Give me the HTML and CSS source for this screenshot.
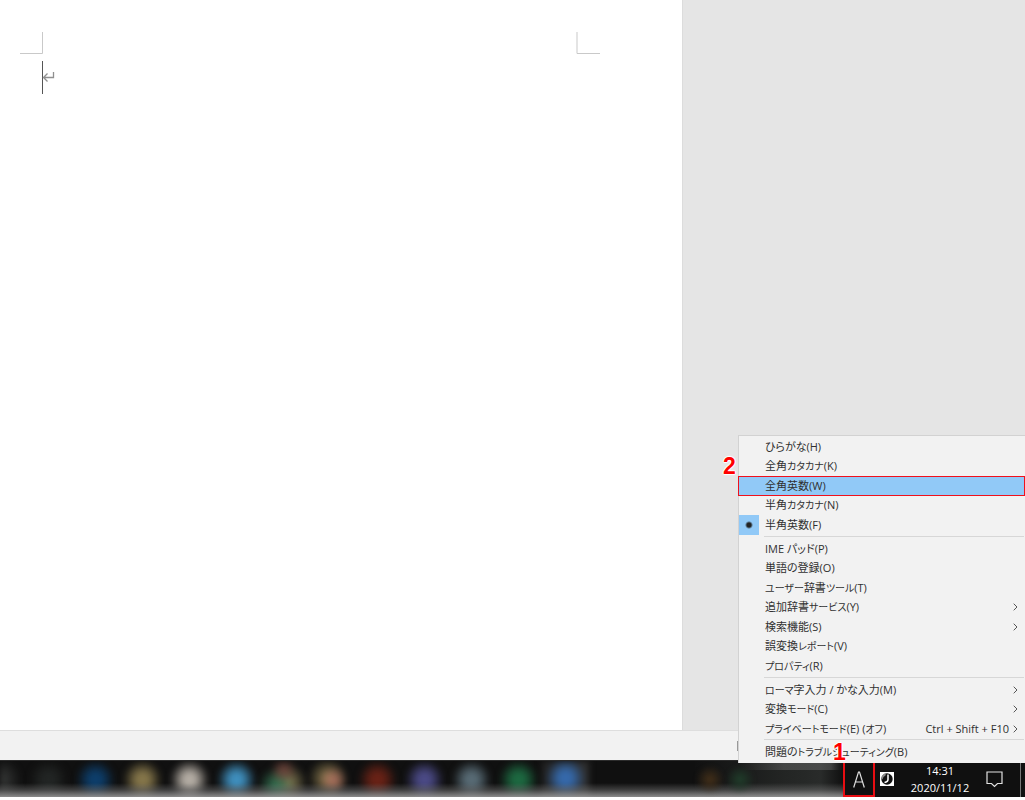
FILE: index.html
```
<!DOCTYPE html>
<html lang="ja">
<head>
<meta charset="utf-8">
<title>IME メニュー</title>
<link rel="stylesheet" href="styles.css">
</head>
<body>
<div class="desktop">
  <main class="workspace">
    <section class="page" aria-label="文書">
      <svg class="margins" width="600" height="100" viewBox="0 0 600 100" fill="none" aria-hidden="true">
        <path d="M42.5 32V53.5H20M577 32V53.5H600" stroke="#c9c9c9"/>
        <path d="M42.5 61V94" stroke="#555"/>
        <path d="M53.500 72V77.500H44M47.500 73.500L43.500 77.500L47.500 81.500" stroke="#909090" stroke-width="1.300"/>
      </svg>
    </section>
  </main>
  <div class="statusbar"><span class="status-icon"></span></div>
  <footer class="taskbar">
    <div class="apps">
      <i class="app first"></i><i class="app dim"></i><i class="app navy"></i><i class="app folder"></i><i class="app white"></i><i class="app sky"></i><i class="app chrome"></i><i class="app paint"></i><i class="app red"></i><i class="app violet"></i><i class="app steel"></i><i class="app green"></i><i class="app word"></i>
    </div>
    <div class="hidden-tray"><i class="blob brown"></i><i class="blob leaf"></i></div>
    <div class="tray">
      <button class="ime" aria-label="入力モード A">
        <svg width="12" height="17" viewBox="0 0 12 17" fill="none" stroke="#dedede" stroke-width="1.200" aria-hidden="true"><path d="M.7 16.500L5.500 1H6.500L11.300 16.500M2.400 11H9.600"/></svg>
      </button>
      <button class="jmode" aria-label="IME">
        <svg width="14" height="14" viewBox="0 0 14 14" aria-hidden="true"><path fill="#fff" d="M0 0H14V14H0z"/><circle cx="7" cy="7" r="5.700" fill="#111"/><path d="M8 2.500V7.500Q8 10 4.500 10.500" fill="none" stroke="#fff" stroke-width="1.500"/><path d="M1.500 6.500Q1.500 2 6 1.300L5.500 3.500Q3 4.500 2.500 7.500z" fill="#888"/></svg>
      </button>
      <div class="clock"><time>14:31</time><time>2020/11/12</time></div>
      <button class="notice" aria-label="通知">
        <svg width="17" height="17" viewBox="0 0 17 17" fill="none" stroke="#e2e2e2" stroke-width="1.200" aria-hidden="true"><path d="M1 1H16V12.500H11.500L8.500 15.500L5.500 12.500H1z"/></svg>
      </button>
      <span class="show-desktop"></span>
    </div>
  </footer>
  <div class="menu" role="menu">
    <button class="item" role="menuitem"><span>ひらがな(H)</span></button>
    <button class="item" role="menuitem"><span>全角<span class="kana">カタカナ</span>(K)</span></button>
    <button class="item selected" role="menuitem"><span>全角英数(W)</span></button>
    <button class="item" role="menuitem"><span>半角<span class="kana">カタカナ</span>(N)</span></button>
    <button class="item checked" role="menuitem"><span>半角英数(F)</span></button>
    <div class="sep"></div>
    <button class="item" role="menuitem"><span>IME パッド(P)</span></button>
    <button class="item" role="menuitem"><span>単語の登録(O)</span></button>
    <button class="item" role="menuitem"><span><span class="kana">ユーザー</span>辞書<span class="kana">ツール</span>(T)</span></button>
    <button class="item" role="menuitem"><span>追加辞書<span class="kana">サービス</span>(Y)</span><svg class="chev" viewBox="0 0 5 8"><path d="M.7 .7L4 4L.7 7.300"/></svg></button>
    <button class="item" role="menuitem"><span>検索機能(S)</span><svg class="chev" viewBox="0 0 5 8"><path d="M.7 .7L4 4L.7 7.300"/></svg></button>
    <button class="item" role="menuitem"><span>誤変換<span class="kana">レポート</span>(V)</span></button>
    <button class="item" role="menuitem"><span><span class="kana">プロパティ</span>(R)</span></button>
    <div class="sep"></div>
    <button class="item" role="menuitem"><span><span class="kana">ローマ</span>字入力 / かな入力(M)</span><svg class="chev" viewBox="0 0 5 8"><path d="M.7 .7L4 4L.7 7.300"/></svg></button>
    <button class="item" role="menuitem"><span>変換<span class="kana">モード</span>(C)</span><svg class="chev" viewBox="0 0 5 8"><path d="M.7 .7L4 4L.7 7.300"/></svg></button>
    <button class="item" role="menuitem"><span><span class="kana">プライベートモード</span>(E) (<span class="kana">オフ</span>)</span><span class="keys">Ctrl + Shift + F10</span><svg class="chev" viewBox="0 0 5 8"><path d="M.7 .7L4 4L.7 7.300"/></svg></button>
    <div class="sep"></div>
    <button class="item" role="menuitem"><span>問題の<span class="kana">トラブルシューティング</span>(B)</span></button>
    <b class="step two">2</b>
    <b class="step one">1</b>
  </div>
</div>
</body>
</html>
```
FILE: styles.css
```
* { box-sizing: border-box; }
body {
  margin: 0;
  background: #fff;
  font-family: "Open Sans", "Noto Sans CJK JP", sans-serif;
}
button {
  margin: 0;
  padding: 0;
  border: 0;
  background: none;
  color: inherit;
  font: inherit;
}
.desktop {
  position: relative;
  display: flex;
  flex-direction: column;
  height: 100vh;
  padding-bottom: 3px;
  overflow: hidden;
}
.workspace {
  flex: 1;
  display: flex;
  background: #e5e5e5;
}
.page {
  width: 66.6%;
  background: #fff;
  border-right: 1px solid #dcdcdc;
}
.margins { display: block; }
.statusbar {
  display: flex;
  align-items: center;
  justify-content: flex-end;
  height: 30px;
  padding-right: 286px;
  background: #f2f2f2;
  border-top: 1px solid #dedede;
}
.status-icon {
  width: 2px;
  height: 10px;
  background: #999;
}
.taskbar {
  position: relative;
  display: flex;
  height: 37px;
  background: #101010;
  border-top: 1px solid #2c2c2c;
  color: #fff;
}
.apps {
  flex: 1;
  display: flex;
  align-items: center;
  overflow: hidden;
}
.app {
  --c: #262827;
  flex: none;
  width: 47px;
  height: 37px;
  background: radial-gradient(circle at 50% 50%, var(--c) 0, var(--c) 20%, transparent 66%);
  filter: blur(3px);
}
.app.first { width: 25px; background: radial-gradient(circle at 0 50%, #3b3d3c, transparent 70%); }
.app.dim { --c: #222524; }
.app.navy { --c: #0d3e6b; }
.app.folder { --c: #85764a; }
.app.white { --c: #b4ada4; }
.app.sky { --c: #3f8fbe; }
.app.chrome {
  background:
    radial-gradient(circle at 50% 25%, #71443c, transparent 36%),
    radial-gradient(circle at 34% 65%, #337554, transparent 46%),
    radial-gradient(circle at 60% 58%, #8f8559, transparent 54%);
}
.app.paint {
  background:
    radial-gradient(circle at 56% 52%, #b07060, transparent 44%),
    radial-gradient(circle at 44% 46%, #958554, transparent 60%);
}
.app.red { --c: #692216; }
.app.violet { --c: #4b4a86; }
.app.steel { --c: #586b75; }
.app.green { --c: #1d6941; }
.app.word {
  background:
    radial-gradient(circle at 50% 46%, #3569ab 20%, transparent 66%),
    linear-gradient(90deg, #222, #303030);
}
.hidden-tray {
  width: 148px;
  display: flex;
  background: linear-gradient(90deg, #0000 30%, #8885 60%, #8885 92%, #111) 0 0 / 100% 9px no-repeat, linear-gradient(90deg, #111, #232524 60%, #292b2a 85%, #101010);
}
.blob {
  width: 30px;
  height: 37px;
  filter: blur(2px);
}
.brown { background: radial-gradient(circle, #443019, transparent 60%); }
.leaf { background: radial-gradient(circle, #203e2b, transparent 60%); }
.apps::after {
  content: "";
  position: absolute;
  left: 0;
  right: 182px;
  bottom: 0;
  height: 14px;
  background: linear-gradient(#8880, #7777 50%, #aaac);
}
.tray {
  position: relative;
  display: flex;
  width: 182px;
  background: #101010;
}
.ime {
  display: grid;
  place-items: center;
  width: 32px;
  height: 36px;
  border: 2px solid #e80d12;
}
.jmode {
  display: grid;
  place-items: center;
  width: 24px;
}
.clock {
  width: 82px;
  display: grid;
  grid-template-rows: 17px 17px;
  padding-top: 1px;
  justify-items: center;
  font-size: 11px;
  line-height: 17px;
}
.notice {
  display: grid;
  place-items: center;
  flex: 1;
}
.show-desktop {
  width: 5px;
  margin-left: 12px;
  border-left: 1px solid #777;
}
.menu {
  position: absolute;
  right: 0;
  bottom: 37px;
  width: 287px;
  height: 328px;
  display: flex;
  flex-direction: column;
  padding: 1px 0;
  border: 1px solid #d2d2d2;
  border-right: 0;
  border-bottom: 0;
  background: #f2f2f2;
  color: #303030;
  font-size: 11px;
  line-height: 16px;
  font-feature-settings: "palt";
}
.kana { font-size: 10px; }
.item {
  flex: 1 1 0;
  min-height: 0;
  display: flex;
  align-items: center;
  padding: 0 7px 0 26px;
  text-align: left;
  white-space: nowrap;
}
.item > span:first-child { flex: 1; }
.selected {
  margin-left: -1px;
  padding-left: 27px;
  background: #91c9f7;
  box-shadow: inset 0 0 0 1px #f0101c;
}
.checked {
  background:
    radial-gradient(circle at 10px 50%, #222 2px, transparent 4px),
    linear-gradient(#91c9f7, #91c9f7) 0 0 / 20px 100% no-repeat;
}
.sep {
  height: 4px;
  flex: none;
  margin: 0 1px 0 25px;
  background: linear-gradient(#d7d7d7, #d7d7d7) 0 1px / 100% 1px no-repeat;
}
.chev {
  width: 5px;
  height: 8px;
  margin-left: 4px;
  fill: none;
  stroke: #555;
}
.step {
  position: absolute;
  color: #f00;
  font: bold 23px/24px "Liberation Sans", sans-serif;
  text-shadow: 1px 0 1px #fff, -1px 0 1px #fff, 0 1px 1px #fff, 0 -1px 1px #fff, 0 0 2px #fff;
}
.two { left: -16px; top: 18px; }
.one { left: 94px; bottom: -1px; }
```
